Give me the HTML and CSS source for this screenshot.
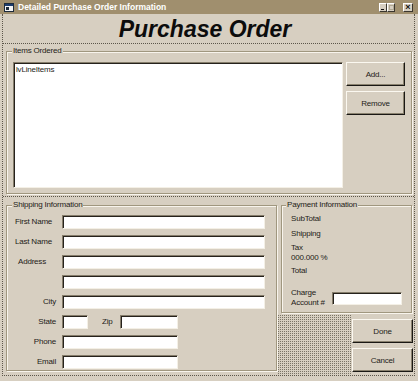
FILE: index.html
```html
<!doctype html>
<html>
  <head>
    <meta charset="utf-8">
    <title>Detailed Purchase Order Information</title>
    <link rel="stylesheet" href="styles.css">
  </head>
  <body>
    <div class="window">
      <div class="titlebar">
        <svg class="appicon" width="10" height="9" viewBox="0 0 10 9">
          <rect x="0.5" y="0.5" width="9" height="8" fill="#f4f4f4" stroke="#1c2a3a"/>
          <rect x="1" y="1" width="8" height="2" fill="#1c3c6c"/>
          <rect x="2" y="4" width="3" height="3" fill="#1c2a3a"/>
        </svg>
        <span class="caption">Detailed Purchase Order Information</span>
        <div class="controls">
          <span class="ctl ctl-min"></span>
          <span class="ctl ctl-max"></span>
          <span class="ctl ctl-close">&times;</span>
        </div>
      </div>

      <div class="form">
        <h1 class="heading">Purchase Order</h1>

        <fieldset class="group items">
          <legend>Items Ordered</legend>
          <div class="items-body">
            <div class="listbox">lvLineItems</div>
            <div class="item-buttons">
              <button class="btn">Add...</button>
              <button class="btn">Remove</button>
            </div>
          </div>
        </fieldset>

        <div class="lower">
          <fieldset class="group shipping">
            <legend>Shipping Information</legend>
            <div class="ship-grid">
              <label class="lbl">First Name</label>
              <input class="txt wide">
              <label class="lbl">Last Name</label>
              <input class="txt wide">
              <label class="lbl lbl-addr">Address</label>
              <input class="txt wide">
              <span></span>
              <input class="txt wide">
              <label class="lbl lbl-r">City</label>
              <input class="txt wide">
              <label class="lbl lbl-r">State</label>
              <div class="state-row">
                <input class="txt state">
                <label class="lbl zip-lbl">Zip</label>
                <input class="txt zip">
              </div>
              <label class="lbl lbl-r">Phone</label>
              <input class="txt mid">
              <label class="lbl lbl-r">Email</label>
              <input class="txt mid">
            </div>
          </fieldset>

          <div class="side">
            <fieldset class="group payment">
              <legend>Payment Information</legend>
              <div class="pay-body">
                <div class="pay-line">SubTotal</div>
                <div class="pay-line shipping-line">Shipping</div>
                <div class="pay-line tax-line">Tax<br>000.000 %</div>
                <div class="pay-line total-line">Total</div>
                <div class="charge-row">
                  <div class="pay-line charge-lbl">Charge<br>Account #</div>
                  <input class="txt charge">
                </div>
              </div>
            </fieldset>
            <div class="actions">
              <div class="dots"></div>
              <div class="action-buttons">
                <button class="btn">Done</button>
                <button class="btn">Cancel</button>
              </div>
            </div>
          </div>
        </div>
      </div>
    </div>
  </body>
</html>
```

FILE: styles.css
```css
body{
  margin:0;
  background:#d7cfc1;
  font-family:"Liberation Sans", Arial, sans-serif;
  color:#1e1c18;
}
.window{
  width:418px; height:381px;
  background:#d7cfc1;
  overflow:hidden;
}

/* title bar */
.titlebar{
  height:14px;
  background:#a08f6e;
  display:flex; align-items:center;
  padding-left:4px;
}
.appicon{display:block;}
.caption{
  color:#fff; font-weight:bold; font-size:8.5px;
  margin-left:4px; white-space:nowrap;
}
.controls{margin-left:auto; margin-right:5px; display:flex;}
.ctl{
  width:8px; height:9px; box-sizing:border-box;
  background:#d7cfc1;
  border:1px solid; border-color:#fff #3a362e #3a362e #fff;
  position:relative;
  font-size:9px; line-height:7px; text-align:center; font-weight:bold;
}
.ctl-min::after{
  content:""; position:absolute; left:1px; bottom:1px;
  width:3px; height:1px; background:#111;
}
.ctl-max::after{
  content:""; position:absolute; left:1px; top:1px;
  width:3px; height:3px; border:1px solid #b0a893;
}
.ctl-close{margin-left:8px; width:10px; color:#111;}

/* form */
.form{
  margin:0 3px 0 2px;
  border-left:1px dotted #5c564a;
  border-right:1px dotted #5c564a;
  border-bottom:1px dotted #5c564a;
}
.heading{
  margin:0;
  height:28px; padding:1px 7px 0 0;
  line-height:28px;
  font-size:23px; font-style:italic; font-weight:bold;
  text-align:center; color:#0c0c0c;
  border-bottom:1px dotted #5c564a;
}

.group{
  margin:0; padding:0; min-width:0;
  border:1px solid #a0977f;
  box-shadow:inset 1px 1px 0 #f8f4ec, 1px 1px 0 #f8f4ec;
}
.group legend{
  font-size:8px; line-height:10px; letter-spacing:-0.2px;
  padding:0 1px; margin-left:5px;
  background:#d7cfc1;
}

.items{margin:2px 2px 0 3px;}
.items-body{
  display:flex; gap:3px;
  padding:6px 6px 5px 6px;
}
.listbox{
  flex:1; height:126px; box-sizing:border-box;
  background:#fff;
  border:1px solid; border-color:#857d6b #f4f0e6 #f4f0e6 #857d6b;
  box-shadow:inset 1px 1px 0 #26221c;
  padding:2px 0 0 2px;
  font-size:8px; line-height:10px; letter-spacing:-0.2px;
}
.item-buttons{display:flex; flex-direction:column; gap:5px; width:59px;}

.btn{
  height:24px; box-sizing:border-box; padding:0;
  background:#d7cfc1;
  border:1px solid; border-color:#fbf8f0 #1a1814 #1a1814 #fbf8f0;
  box-shadow:inset -1px -1px 0 #8a826f;
  font-family:inherit; font-size:8px; letter-spacing:-0.2px; color:#1e1c18;
}

.lower{
  display:flex;
  margin-top:2px;
  border-top:1px dotted #5c564a;
}
.shipping{margin:3px 0 4px 3px; width:271px; box-sizing:border-box;}
.ship-grid{
  display:grid;
  grid-template-columns:41px 203px;
  grid-auto-rows:14px;
  column-gap:6px; row-gap:6px;
  padding:5px 0 1px 8px;
}
.lbl{font-size:8px; line-height:14px; letter-spacing:-0.2px; white-space:nowrap;}
.lbl-addr{padding-left:3px;}
.lbl-r{text-align:right;}

.txt{
  box-sizing:border-box; height:14px; margin:0; padding:0;
  background:#fff;
  border:1px solid; border-color:#857d6b #f4f0e6 #f4f0e6 #857d6b;
  box-shadow:inset 1px 1px 0 #26221c;
}
.wide{width:203px;}
.mid{width:116px;}
.state-row{display:flex; align-items:center;}
.state{width:26px;}
.zip-lbl{width:18px; margin-left:14px;}
.zip{width:58px;}

.side{flex:1; display:flex; flex-direction:column;}
.payment{margin:3px 2px 0 4px;}
.payment legend{margin-left:4px;}
.pay-body{padding:4px 4px 4px 9px;}
.pay-line{font-size:8px; line-height:10px; letter-spacing:-0.2px;}
.shipping-line{margin-top:5px;}
.tax-line{margin-top:4px;}
.total-line{margin-top:3px;}
.charge-row{display:flex; align-items:center; margin-top:12px;}
.charge-lbl{width:41px;}
.charge{width:70px; height:13px;}

.actions{flex:1; display:flex;}
.dots{
  flex:1; margin:2px 1px 0 1px;
  background-image:conic-gradient(from 270deg at 1px 1px, #7a7466 90deg, transparent 0);
  background-size:2px 2px;
}
.action-buttons{
  width:61px; margin-right:1px; padding-top:6px;
  display:flex; flex-direction:column; gap:5px;
}
```
